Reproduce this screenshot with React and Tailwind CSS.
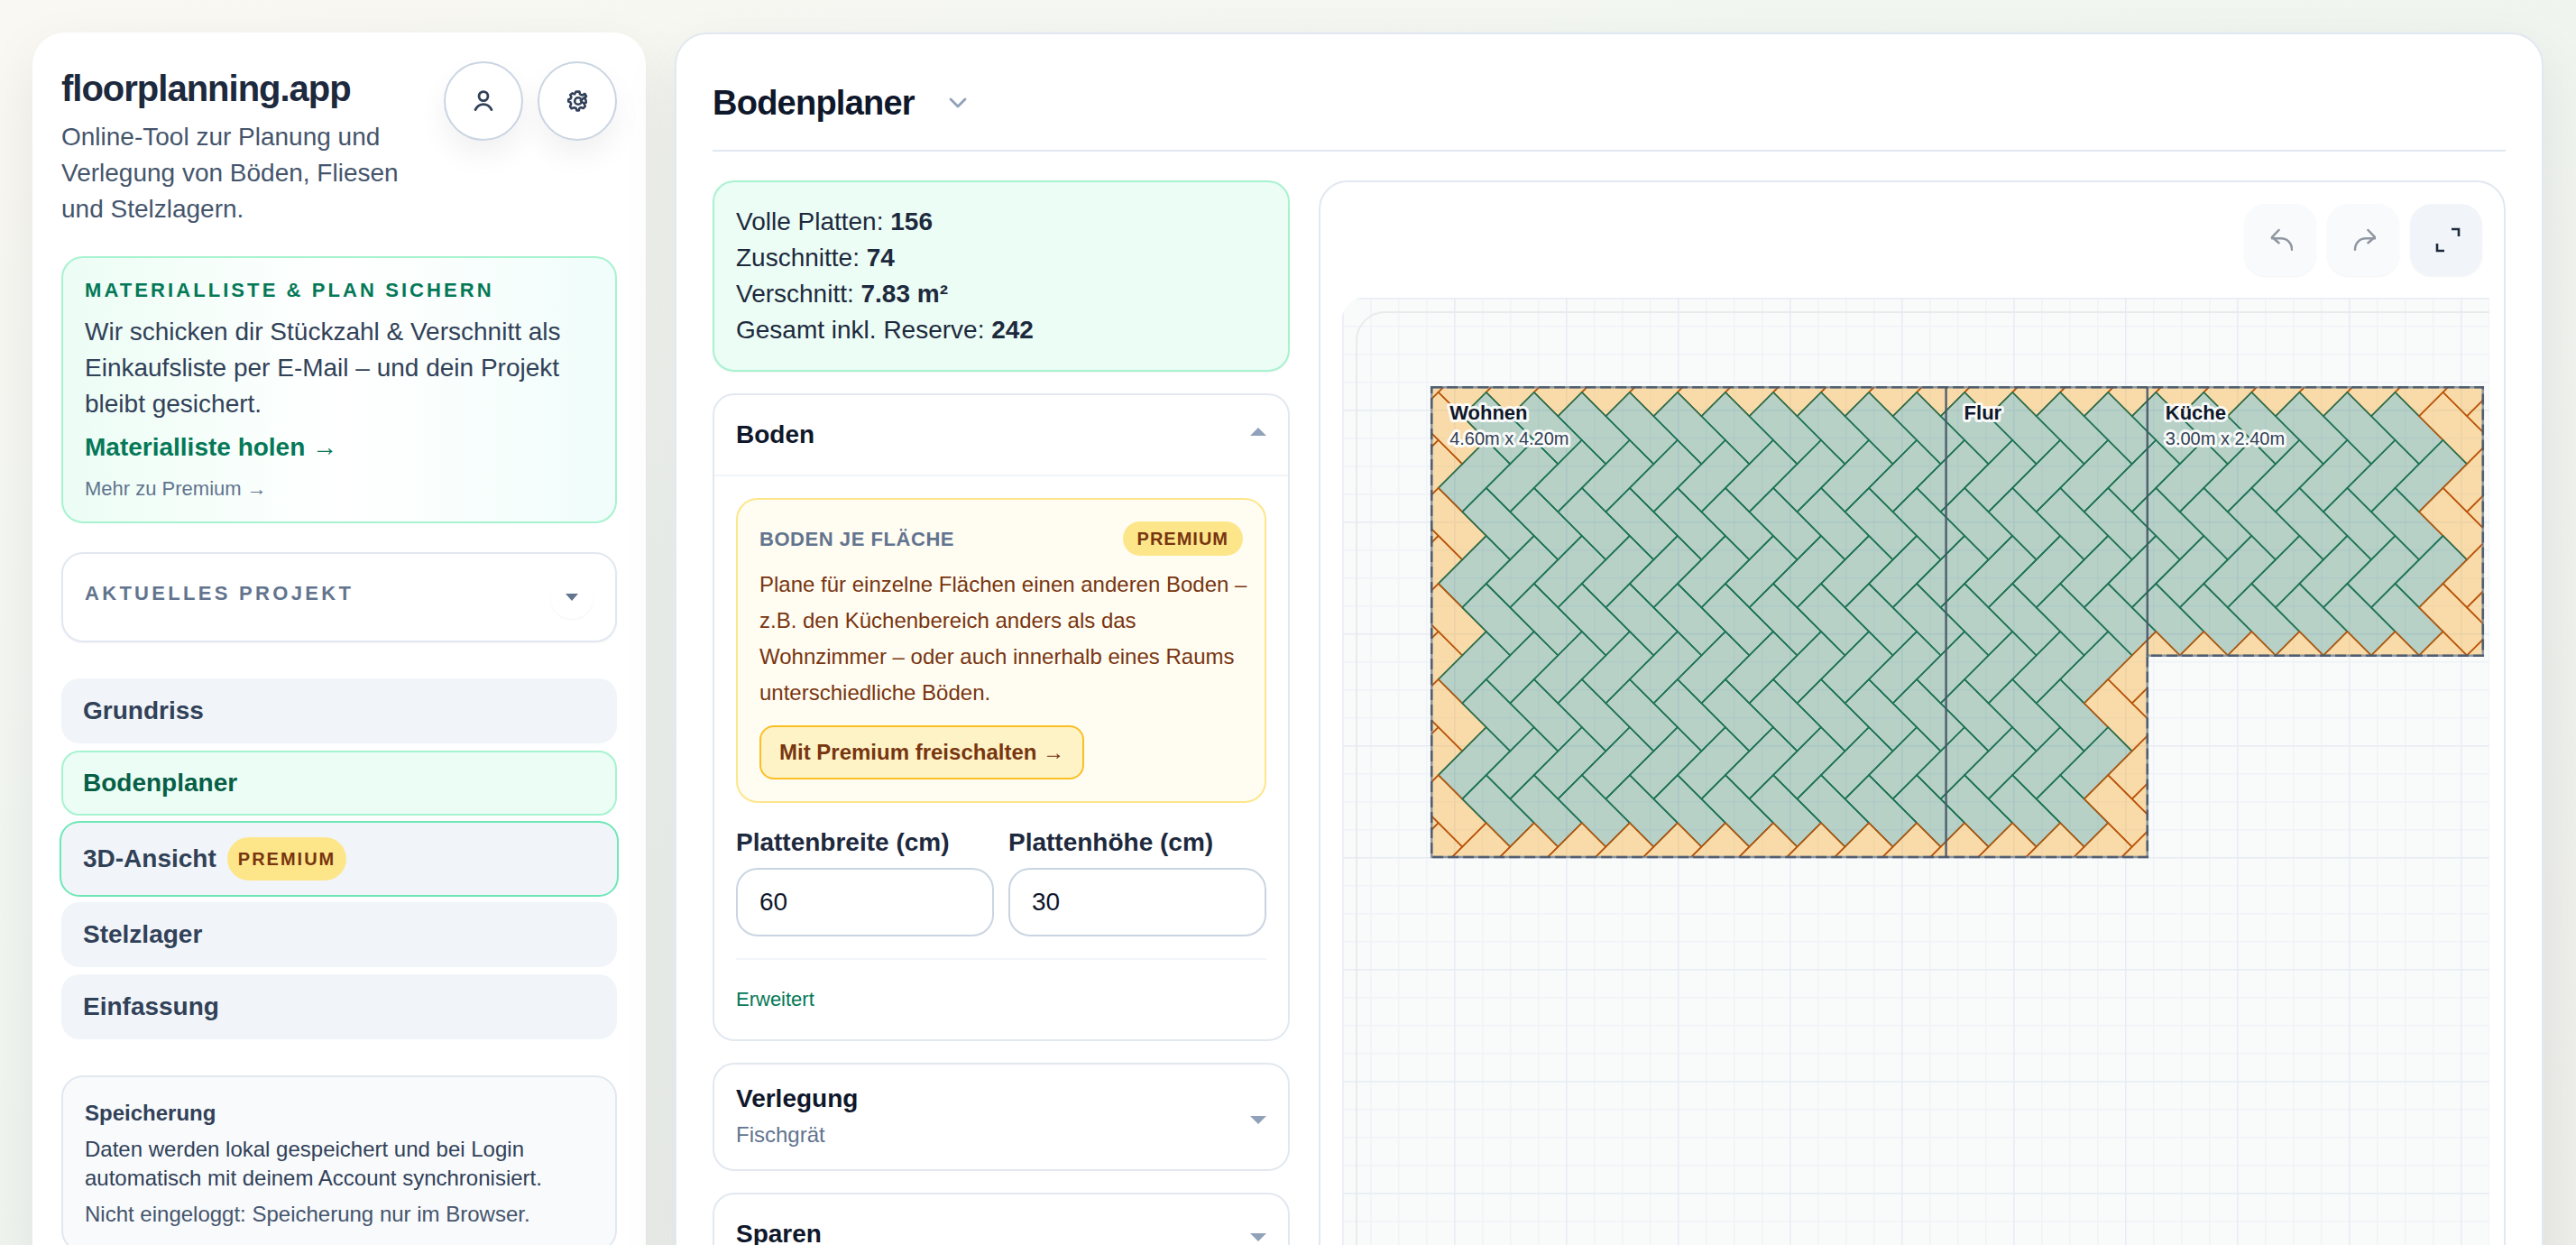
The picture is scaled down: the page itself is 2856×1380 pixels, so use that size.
import React, { useState } from 'react';

const NAV_ITEMS = [
  { id: 'grundriss', label: 'Grundriss' },
  { id: 'bodenplaner', label: 'Bodenplaner' },
  { id: '3d', label: '3D-Ansicht', premium: true },
  { id: 'stelzlager', label: 'Stelzlager' },
  { id: 'einfassung', label: 'Einfassung' },
];

const STATS = [
  ['Volle Platten', '156'],
  ['Zuschnitte', '74'],
  ['Verschnitt', '7.83 m²'],
  ['Gesamt inkl. Reserve', '242'],
];

const PersonIcon = () => (
  <svg className="w-8 h-8" viewBox="0 0 32 32" fill="none" stroke="currentColor" strokeWidth="2.8" strokeLinecap="round" aria-hidden="true">
    <circle cx="16" cy="10.6" r="5" />
    <path d="M7 25.6C9 21.6 12.2 19.6 16 19.6S23 21.6 25 25.6" />
  </svg>
);

const GearIcon = () => (
  <svg className="w-8 h-8" viewBox="0 0 32 32" fill="none" stroke="currentColor" strokeWidth="2.6" strokeLinejoin="round" strokeLinecap="round" aria-hidden="true">
    <path d="M14.6 5.6H18.4L19 8.4L21.4 9.6L24.4 8L26 10.6L24.2 13L25.4 14.8L25.8 17.6L23.6 18.6L24.8 21.8L22.6 24L19.8 23L18.4 24L17.8 26.4H15.4L14.6 24L12.6 23.2L9.6 24.2L8 22L9.2 19.2L8.4 17.4L6.2 16.6V14.4L8.8 13.2L9.4 11.4L8.2 9.2L10.4 7.4L13 8.4Z" />
    <circle cx="17" cy="16" r="3.8" />
    <path d="M19.8 15.4L24.6 11.6M21 17L23.4 18.4" />
  </svg>
);

const UndoIcon = () => (
  <svg className="w-7 h-7" viewBox="0 0 28 28" fill="none" stroke="currentColor" strokeWidth="2.5" strokeLinecap="round" strokeLinejoin="round" aria-hidden="true">
    <path d="M12.5 3L5 10.8L12.5 17.3M5 12.3H15C22 12.3 27 17.5 27 24.8" />
  </svg>
);

const RedoIcon = () => (
  <svg className="w-7 h-7" viewBox="0 0 28 28" fill="none" stroke="currentColor" strokeWidth="2.5" strokeLinecap="round" strokeLinejoin="round" aria-hidden="true">
    <path d="M19.5 3L27 10.8L19.5 17.3M27 12.3H17C10 12.3 5 17.5 5 24.8" />
  </svg>
);

const ExpandIcon = () => (
  <svg className="w-8 h-8" viewBox="0 0 32 32" fill="none" stroke="currentColor" strokeWidth="2.6" aria-hidden="true">
    <path d="M22 4H30V12M6 20V28H14" />
  </svg>
);

const Caret = ({ open = false }) => (
  <svg className={open ? 'w-[18px] h-[18px] rotate-180 text-slate-400' : 'w-[18px] h-[18px] text-slate-400'} viewBox="0 0 18 18" fill="currentColor" aria-hidden="true">
    <path d="M0 8H18L9 17Z" />
  </svg>
);

/* Floor plan, all lengths in metres unless noted */
const SCALE = 124;
const ORIGIN = 0.8 * SCALE;
const m = (v) => ORIGIN + v * SCALE;

const OUTLINE = [[0, 0], [9.4, 0], [9.4, 2.4], [6.4, 2.4], [6.4, 4.2], [0, 4.2]];
const OUTLINE_PATH = `M${OUTLINE.map(([x, y]) => `${m(x)} ${m(y)}`).join('L')}Z`;

const ROOMS = [
  { name: 'Wohnen', size: '4.60m x 4.20m', x: 0 },
  { name: 'Flur', x: 4.6 },
  { name: 'Küche', size: '3.00m x 2.40m', x: 6.4 },
];

// half a plate width on the diagonal, in px
const UNIT = 26.52;
const ANCHOR = { x: 106.7, y: 423 };
const RISING = [[0, 0], [2, -2], [3, -1], [1, 1]];
const FALLING = [[2, 0], [4, 2], [3, 3], [1, 1]];

const insideFloor = (x, y) => {
  const e = 0.6;
  if (x < m(0) - e || y < m(0) - e) return false;
  return (x <= m(6.4) + e && y <= m(4.2) + e) || (x <= m(9.4) + e && y <= m(2.4) + e);
};

const containsPoint = (pts, px, py) => {
  const sides = pts.map(([x, y], i) => {
    const [nx, ny] = pts[(i + 1) % pts.length];
    return (nx - x) * (py - y) - (ny - y) * (px - x) > 0;
  });
  return sides.every((s) => s === sides[0]);
};

const buildTiles = () => {
  const tiles = [];
  for (let row = -4; row <= 2; row++) {
    [RISING, FALLING].forEach((shape, kind) => {
      for (let col = -3; col <= 24; col++) {
        const pts = shape.map(([u, v]) => [
          ANCHOR.x + (u + col * 2) * UNIT,
          ANCHOR.y + (v + row * 4) * UNIT,
        ]);
        const full = pts.every(([x, y]) => insideFloor(x, y)) && !containsPoint(pts, m(6.4), m(2.4));
        tiles.push({ id: `${row}-${kind}-${col}`, full, points: pts.map((p) => p.join(',')).join(' ') });
      }
    });
  }
  return tiles;
};

const TILES = buildTiles();

const FloorPlan = () => (
  <svg className="block w-full h-full" role="img" aria-label="Verlegeplan">
    <defs>
      <pattern id="minor" width="31" height="31" patternUnits="userSpaceOnUse">
        <path d="M31 0H0V31" fill="none" stroke="#f0f3f7" strokeWidth="3" />
      </pattern>
      <pattern id="major" width="124" height="124" patternUnits="userSpaceOnUse">
        <path d="M124 0H0V124" fill="none" stroke="#e8edf4" strokeWidth="3" />
      </pattern>
      <clipPath id="floor">
        <path d={OUTLINE_PATH} />
      </clipPath>
    </defs>
    <rect width="100%" height="100%" fill="url(#minor)" />
    <rect width="100%" height="100%" fill="url(#major)" />
    <rect x="16" y="16" width="2000" height="1600" rx="32" fill="none" stroke="#e8ebeb" strokeWidth="2" />

    <g clipPath="url(#floor)">
      {TILES.map((t) => (
        <polygon
          key={t.id}
          points={t.points}
          fill={t.full ? '#1f6f53' : '#f59e0b'}
          fillOpacity={t.full ? 0.3 : 0.34}
          stroke={t.full ? '#1f7356' : '#b9540c'}
          strokeWidth="1.6"
        />
      ))}
    </g>

    <path d={OUTLINE_PATH} fill="none" stroke="#64748b" strokeOpacity="0.7" strokeWidth="2.5" />
    <path d={OUTLINE_PATH} fill="none" stroke="#475569" strokeOpacity="0.85" strokeWidth="2.5" strokeDasharray="12 5" />
    <path d={`M${m(4.6)} ${m(0)}V${m(4.2)}M${m(6.4)} ${m(0)}V${m(2.4)}`} stroke="#475569" strokeOpacity="0.9" strokeWidth="2.5" />

    {ROOMS.map((room) => (
      <g key={room.name} className="font-['Liberation_Sans',Arial,sans-serif]" stroke="#ffffff" strokeOpacity="0.9" strokeWidth="6" strokeLinejoin="round" paintOrder="stroke">
        <text x={m(room.x) + 20} y="135" className="text-[22px] font-bold" fill="#0f172a">{room.name}</text>
        {room.size && (
          <text x={m(room.x) + 20} y="163" className="text-[20px]" fill="#334155">{room.size}</text>
        )}
      </g>
    ))}
  </svg>
);

const Sidebar = () => (
  <aside className="w-[680px] shrink-0 self-start bg-white rounded-[36px] p-8 shadow-[0_24px_64px_rgba(15,23,42,0.08)]">
    <div className="flex items-start justify-between gap-4">
      <div className="pt-2 min-w-0">
        <h1 className="text-[40px] leading-[44px] font-bold tracking-tight text-slate-800">floorplanning.app</h1>
        <p className="mt-3 text-[28px] leading-10 text-slate-600">
          Online-Tool zur Planung und Verlegung von Böden, Fliesen und Stelzlagern.
        </p>
      </div>
      <div className="flex gap-4 shrink-0 text-slate-700">
        <button type="button" aria-label="Konto" className="w-[88px] h-[88px] rounded-full border-2 border-slate-300 bg-white flex items-center justify-center shadow-[0_16px_32px_rgba(15,23,42,0.06)]">
          <PersonIcon />
        </button>
        <button type="button" aria-label="Einstellungen" className="w-[88px] h-[88px] rounded-full border-2 border-slate-300 bg-white flex items-center justify-center shadow-[0_16px_32px_rgba(15,23,42,0.06)]">
          <GearIcon />
        </button>
      </div>
    </div>

    {/* Material list */}
    <section className="mt-8 rounded-3xl border-2 border-[#a7f3d0] bg-linear-to-r from-[#ecfdf5] via-white via-50% to-[#f0fdfa] px-6 py-5">
      <h2 className="text-[22px] leading-8 font-bold uppercase tracking-[0.14em] text-[#047857]">Materialliste &amp; Plan sichern</h2>
      <p className="mt-2.5 text-[28px] leading-10 text-slate-700">
        Wir schicken dir Stückzahl &amp; Verschnitt als Einkaufsliste per E-Mail – und dein Projekt bleibt gesichert.
      </p>
      <a href="#materialliste" className="block mt-2 text-[28px] leading-10 font-bold text-[#047857]">Materialliste holen →</a>
      <a href="#premium" className="block mt-2.5 text-[22px] leading-8 text-slate-500">Mehr zu Premium →</a>
    </section>

    {/* Current project */}
    <section className="mt-8 h-[100px] rounded-3xl border-2 border-slate-200 bg-white px-6 flex items-center justify-between shadow-xs">
      <h2 className="pb-2 text-[22px] leading-8 font-bold uppercase tracking-[0.15em] text-slate-500">Aktuelles Projekt</h2>
      <button type="button" aria-label="Projekt aufklappen" className="w-12 h-12 rounded-full bg-white flex items-center justify-center text-slate-500 shadow-xs">
        <svg className="w-[14px] h-2" viewBox="0 0 14 8" fill="currentColor" aria-hidden="true">
          <path d="M0 0H14L7 8Z" />
        </svg>
      </button>
    </section>

    <nav className="mt-10 flex flex-col gap-2">
      {NAV_ITEMS.map((item) => {
        if (item.premium) {
          return (
            <button key={item.id} type="button" className="h-20 rounded-[20px] bg-slate-100 ring-2 ring-[#6ee7b7] px-6 flex items-center gap-3 text-[28px] font-bold text-slate-700">
              {item.label}
              <span className="h-12 rounded-full bg-[#fde68a] px-3 flex items-center text-[20px] tracking-widest text-[#78350f]">PREMIUM</span>
            </button>
          );
        }
        return (
          <button
            key={item.id}
            type="button"
            className={
              item.id === 'bodenplaner'
                ? 'h-[72px] rounded-[20px] border-2 border-[#a7f3d0] bg-[#ecfdf5] px-[22px] text-left text-[28px] font-bold text-[#065f46]'
                : 'h-[72px] rounded-[20px] bg-slate-100 px-6 text-left text-[28px] font-bold text-slate-700'
            }
          >
            {item.label}
          </button>
        );
      })}
    </nav>

    <section className="mt-10 rounded-3xl border-2 border-slate-200 bg-slate-50 p-6 text-[24px] leading-8 text-slate-700">
      <h2 className="font-bold">Speicherung</h2>
      <p className="mt-2">Daten werden lokal gespeichert und bei Login automatisch mit deinem Account synchronisiert.</p>
      <p className="mt-2 text-slate-600">Nicht eingeloggt: Speicherung nur im Browser.</p>
    </section>
  </aside>
);

const SettingsColumn = () => {
  const [width, setWidth] = useState('60');
  const [height, setHeight] = useState('30');

  return (
    <div className="w-[640px] shrink-0 flex flex-col gap-6">
      <div className="rounded-3xl border-2 border-[#a7f3d0] bg-[#ecfdf5] p-6 text-[28px] leading-10 text-slate-800 shadow-xs">
        {STATS.map(([label, value]) => (
          <div key={label}>{label}: <strong className="font-bold">{value}</strong></div>
        ))}
      </div>

      {/* Boden */}
      <section className="rounded-3xl border-2 border-slate-200 bg-white">
        <button type="button" aria-expanded="true" className="w-full h-[90px] border-b-2 border-slate-100 px-6 flex items-center justify-between text-[28px] font-bold text-slate-900">
          Boden
          <Caret open />
        </button>
        <div className="p-6">
          <div className="rounded-3xl border-2 border-[#fde68a] bg-[#fffcf2] p-6">
            <div className="flex items-center justify-between">
              <h3 className="text-[22px] font-bold uppercase tracking-wide text-slate-500">Boden je Fläche</h3>
              <span className="rounded-full bg-[#fde68a] px-4 py-1 text-[20px] leading-[30px] font-bold tracking-wider text-[#78350f]">PREMIUM</span>
            </div>
            <p className="mt-3 -mr-3 text-[24px] leading-10 text-[#78350f]">
              Plane für einzelne Flächen einen anderen Boden – z.B. den Küchenbereich anders als das<br />
              Wohnzimmer – oder auch innerhalb eines Raums unterschiedliche Böden.
            </p>
            <button type="button" className="mt-4 h-[60px] rounded-2xl border-2 border-[#fbbf24] bg-[#fef3c7] px-5 text-[24px] font-bold text-[#78350f] block">
              Mit Premium freischalten →
            </button>
          </div>

          <div className="mt-6 grid grid-cols-2 gap-4">
            <label className="text-[28px] leading-10 font-bold text-slate-800">
              Plattenbreite (cm)
              <input
                type="text"
                value={width}
                onChange={(e) => setWidth(e.target.value)}
                className="block mt-2 w-full h-[76px] rounded-3xl border-2 border-slate-300 bg-white px-6 text-[28px] font-normal text-slate-900"
              />
            </label>
            <label className="text-[28px] leading-10 font-bold text-slate-800">
              Plattenhöhe (cm)
              <input
                type="text"
                value={height}
                onChange={(e) => setHeight(e.target.value)}
                className="block mt-2 w-full h-[76px] rounded-3xl border-2 border-slate-300 bg-white px-6 text-[28px] font-normal text-slate-900"
              />
            </label>
          </div>

          <div className="mt-6 border-t-2 border-slate-100 pt-6">
            <button type="button" className="block text-[22px] leading-10 font-medium text-[#047857]">Erweitert</button>
          </div>
        </div>
      </section>

      {/* Verlegung */}
      <button type="button" className="h-[120px] shrink-0 rounded-3xl border-2 border-slate-200 bg-white px-6 flex items-center justify-between text-left">
        <span>
          <span className="block text-[28px] leading-10 font-bold text-slate-900">Verlegung</span>
          <span className="block text-[24px] leading-10 text-slate-500">Fischgrät</span>
        </span>
        <Caret />
      </button>

      {/* Sparen */}
      <button type="button" className="h-[92px] shrink-0 rounded-3xl border-2 border-slate-200 bg-white px-6 flex items-center justify-between text-[28px] font-bold text-slate-900">
        Sparen
        <Caret />
      </button>
    </div>
  );
};

const PlanPanel = () => (
  <section className="flex-1 min-w-0 h-[1400px] rounded-[32px] border-2 border-slate-200 bg-white pl-6 pt-6 flex flex-col">
    <div className="flex justify-end gap-3 pr-6 pb-6">
      <button type="button" disabled aria-label="Rückgängig" className="w-20 h-20 rounded-3xl bg-slate-50 text-[#8f96a1] flex items-center justify-center shadow-xs">
        <UndoIcon />
      </button>
      <button type="button" disabled aria-label="Wiederholen" className="w-20 h-20 rounded-3xl bg-slate-50 text-[#8f96a1] flex items-center justify-center shadow-xs">
        <RedoIcon />
      </button>
      <button type="button" aria-label="Vollbild" className="w-20 h-20 rounded-3xl bg-slate-100 text-slate-800 flex items-center justify-center shadow-xs">
        <ExpandIcon />
      </button>
    </div>
    <div className="flex-1 mr-4 rounded-tl-3xl overflow-hidden bg-[#f9fbfa]">
      <FloorPlan />
    </div>
  </section>
);

export default function App() {
  return (
    <div className="h-screen overflow-hidden flex gap-8 p-9 bg-linear-to-br from-[#faf8f2] via-[#f1f6f1] via-40% to-[#eeeeea] font-['Liberation_Sans',Arial,sans-serif]">
      <Sidebar />
      <main className="flex-1 min-w-0 self-start bg-white rounded-[36px] border-2 border-slate-200 p-10 shadow-[0_24px_64px_rgba(15,23,42,0.08)]">
        <header className="flex items-center gap-9 pb-4 border-b-2 border-slate-200">
          <h2 className="text-[38px] leading-[72px] font-bold tracking-[-0.02em] text-slate-900">Bodenplaner</h2>
          <button type="button" aria-label="Ansicht wechseln" className="text-slate-400">
            <svg className="w-6 h-6" viewBox="0 0 24 24" fill="none" stroke="currentColor" strokeWidth="2.8" strokeLinecap="round" strokeLinejoin="round" aria-hidden="true">
              <path d="M4 8L12 16L20 8" />
            </svg>
          </button>
        </header>
        <div className="mt-8 flex items-start gap-8">
          <SettingsColumn />
          <PlanPanel />
        </div>
      </main>
    </div>
  );
}
